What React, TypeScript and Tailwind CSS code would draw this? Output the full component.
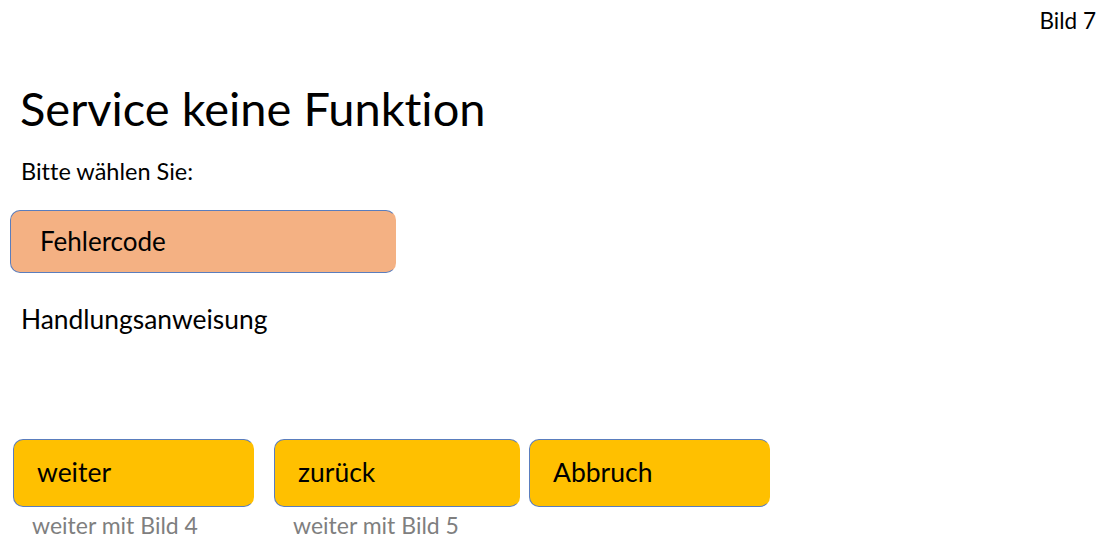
import React from 'react';

const font = { fontFamily: 'Lato, "Open Sans", sans-serif' };

const Button = ({ label, hint, w }: { label: string; hint?: string; w: string }) => (
  <div className="flex flex-col">
    <div
      className={`${w} h-[68px] flex items-center pl-[23px] bg-[#ffc000] border border-[#5a7dbd] border-r-transparent rounded-[10px] text-[26.5px] text-black`}
    >
      {label}
    </div>
    {hint && <div className="pl-[19px] pt-[7px] text-[23px] text-[#7f7f7f] leading-none">{hint}</div>}
  </div>
);

const App: React.FC = () => {
  return (
    <div className="relative w-[1106px] h-[550px] bg-white overflow-hidden [font-variant-ligatures:none]" style={font}>
      <div className="absolute top-[4px] right-[10px] text-[22.5px] text-black">Bild 7</div>

      <div className="flex flex-col pt-[85px]">
        <h1 className="pl-[20px] text-[47px] leading-none text-black">Service keine Funktion</h1>
        <p className="pl-[21px] mt-[28px] text-[23.5px] text-black leading-none">Bitte wählen Sie:</p>

        <div className="ml-[10px] mt-[26px] w-[386px] h-[63px] flex items-center pl-[29px] bg-[#f4b183] border border-[#5a7dbd] border-r-transparent rounded-[10px] text-[26px] text-black">
          Fehlercode
        </div>

        <p className="pl-[21px] mt-[33px] text-[26.4px] text-black leading-none">Handlungsanweisung</p>

        <div className="flex ml-[13px] mt-[107px]">
          <Button label="weiter" hint="weiter mit Bild 4" w="w-[241px]" />
          <div className="ml-[20px]">
            <Button label="zurück" hint="weiter mit Bild 5" w="w-[246px]" />
          </div>
          <div className="ml-[9px]">
            <Button label="Abbruch" w="w-[241px]" />
          </div>
        </div>
      </div>
    </div>
  );
};

export default App;
